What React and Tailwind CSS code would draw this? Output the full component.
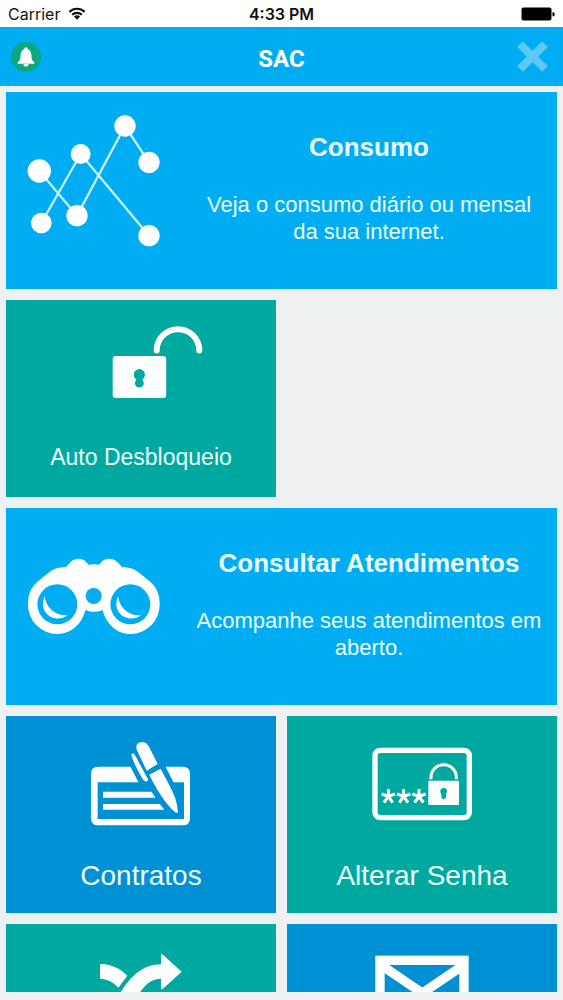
import React from "react";

function WifiIcon() {
  return (
    <svg viewBox="0 0 54 40" className="h-[13px] w-[18px]" fill="none" stroke="#111" strokeWidth="6.5" aria-hidden="true">
      <path d="M3.500 15 A34 34 0 0 1 50.500 15" />
      <path d="M12 24 A22 22 0 0 1 42 24" />
      <path d="M27 39 L17.500 29.500 A14 14 0 0 1 36.500 29.500 Z" fill="#111" stroke="none" />
    </svg>
  );
}

function BatteryIcon() {
  return (
    <svg viewBox="0 0 34 14" className="h-[14px] w-[34px]" aria-hidden="true">
      <rect x="0.500" y="0.500" width="30" height="13" rx="2" fill="#000" />
      <path d="M31.500 5 a2.200 2.200 0 0 1 0 4.400 Z" fill="#000" />
    </svg>
  );
}

function BellIcon() {
  return (
    <svg viewBox="0 0 54 60" className="h-5 w-[18px]" fill="#fff" aria-hidden="true">
      <path d="M27 1 a5 5 0 0 1 5 5 C40 9 43 17 43.500 27 C44 38 46 41 52 46 V50 H2 V46 C8 41 10 38 10.500 27 C11 17 14 9 22 6 a5 5 0 0 1 5 -5 Z" />
      <path d="M19 51 H35 C34 57 31 59 27 59 S20 57 19 51 Z" />
    </svg>
  );
}

function CloseIcon() {
  return (
    <svg viewBox="0 0 92 92" className="h-[31px] w-[31px]" stroke="#5cc8f7" strokeWidth="24" aria-hidden="true">
      <path d="M9 9 L83 83 M83 9 L9 83" />
    </svg>
  );
}

function NetworkIcon() {
  return (
    <g transform="translate(-6 -2) scale(0.33333)" fill="#fff">
      <path
        d="M118 243 L231 377 L375 108 L447 217 M124 399 L242 192 L447 437"
        fill="none"
        stroke="#c4f3ff"
        strokeWidth="7"
      />
      <circle cx="118" cy="243" r="35" />
      <circle cx="124" cy="399" r="31" />
      <circle cx="242" cy="192" r="30" />
      <circle cx="231" cy="377" r="32" />
      <circle cx="375" cy="108" r="32" />
      <circle cx="447" cy="217" r="32" />
      <circle cx="447" cy="437" r="32" />
    </g>
  );
}

function BinocularsIcon() {
  return (
    <g transform="translate(-6 22) scale(0.33333)">
      <path
        fill="#fff"
        d="M172 312 A88 88 0 0 1 84 223 C84 190 94 172 114 154 L146 128 C162 115 178 112 198 111 C210 98 218 86 235 86 C249 86 257 92 265 104 Q282 101 298 104 C306 92 314 86 329 86 C345 86 355 98 366 111 C386 112 401 115 417 128 L449 154 C469 172 479 190 479 223 A88 88 0 0 1 391 312 C352 312 319 284 308 240 Q282 251 256 240 C246 284 211 312 172 312 Z"
      />
      <g fill="#00adf2">
        <circle cx="172" cy="223" r="60" />
        <circle cx="391" cy="223" r="60" />
        <circle cx="281" cy="198" r="24" />
      </g>
      <g fill="#fff">
        <path d="M134 198 C137 228 160 258 203 256 C168 282 112 252 134 198 Z" />
        <path d="M354 198 C357 228 380 258 423 256 C388 282 332 252 354 198 Z" />
      </g>
    </g>
  );
}

function UnlockIcon() {
  return (
    <g>
      <rect x="106.700" y="56" width="53.500" height="42" rx="3" fill="#fff" />
      <path d="M150.700 50.500 A21.300 21.300 0 0 1 193.300 50.500" fill="none" stroke="#fff" strokeWidth="6" strokeLinecap="round" />
      <g fill="#00a99f">
        <circle cx="133.300" cy="74.700" r="5.600" />
        <circle cx="133.300" cy="83.200" r="4.400" />
        <rect x="130.300" y="76" width="6" height="7" />
      </g>
    </g>
  );
}

function ContractIcon() {
  return (
    <g transform="translate(54 -6) scale(0.33333)">
      <g fill="#fff">
        <path
          fillRule="evenodd"
          d="M115 170 H368 Q390 170 390 192 V324 Q390 346 368 346 H115 Q93 346 93 324 V192 Q93 170 115 170 Z M113 217 V327 H372 V217 Z"
        />
        <path d="M129 245 H275 L286 263 H129 Z" />
        <path d="M129 282 H299 L313 299 H129 Z" />
      </g>
      <path d="M209 165 L238 222 H343 L314 165 Z" fill="#0091d5" />
      <g fill="#fff">
        <path d="M231 121 C225 106 233 97 245 97 C256 96 263 102 268 112 L293 162 L260 182 Z" />
        <path d="M214 135 C216 128 222 130 226 137 L264 208 C264 216 258 217 251 211 C240 195 222 162 214 135 Z" />
        <path d="M268 194 L302 176 C322 214 344 252 349 276 L354 305 Q352 311 346 307 C316 281 288 236 268 194 Z" />
      </g>
    </g>
  );
}

function Asterisk({ x }) {
  return <path d={`M${x} 229 V207 M${x} 229 L${x - 20} 222 M${x} 229 L${x + 20} 222 M${x} 229 L${x - 13} 248 M${x} 229 L${x + 13} 248`} />;
}

function PasswordIcon() {
  return (
    <g transform="translate(53 4) scale(0.33333)" fill="none" stroke="#fff">
      <rect x="105" y="91" width="283" height="202" rx="16" strokeWidth="16" />
      <g strokeWidth="9">
        <Asterisk x={145} />
        <Asterisk x={191} />
        <Asterisk x={237} />
      </g>
      <path d="M273 178 V172 A38 38 0 0 1 349 172 V178" strokeWidth="9" />
      <rect x="265" y="182" width="92" height="73" rx="3" fill="#fff" stroke="none" />
      <g fill="#00a99f" stroke="none">
        <circle cx="311" cy="214" r="10" />
        <rect x="304" y="214" width="14" height="23" rx="6" />
      </g>
    </g>
  );
}

function ShuffleIcon() {
  return (
    <g transform="translate(-6 -19) scale(0.33333)" fill="#fff">
      <path d="M300 180 Q300 177 304 177 C334 178 360 190 382 212 L355 248 C340 231 322 222 300 221 Z" />
      <path d="M300 362 C330 362 345 290 362 262 C393 212 430 178 483 178 V150 Q484 145 489 149 L545 200 L489 251 Q484 255 483 249 V221 C455 222 439 234 420 262 C392 305 370 405 300 405 Z" />
      <path d="M483 405 C445 405 420 390 400 365 L426 330 C442 352 458 362 483 362 V332 L545 383 L483 437 Z" />
    </g>
  );
}

function MailIcon() {
  return (
    <g transform="translate(-7 -19) scale(0.33333)" fill="none" stroke="#fff">
      <rect x="300" y="166" width="252" height="184" strokeWidth="28" />
      <path d="M300 178 L427 264 L554 178" strokeWidth="28" />
    </g>
  );
}

function WideCard({ title, text, children }) {
  return (
    <button type="button" className="col-span-2 flex h-[197px] bg-[#00adf2] text-cyan-50">
      <svg viewBox="0 0 175 197" className="h-full w-[175px] shrink-0" aria-hidden="true">
        {children}
      </svg>
      <span className="flex flex-1 flex-col gap-[29px] px-3 pt-10 text-center">
        <span className="text-[26px] leading-[30px] font-bold">{title}</span>
        <span className="text-[22px] leading-[27px]">{text}</span>
      </span>
    </button>
  );
}

function Card({ label, name, color, size, children }) {
  return (
    <button type="button" aria-label={name} className={`flex h-[197px] flex-col items-center text-cyan-50 ${color}`}>
      <svg viewBox="70 0 130 140" className="h-[140px] w-[130px] shrink-0" aria-hidden="true">
        {children}
      </svg>
      <span className={size}>{label}</span>
    </button>
  );
}

export default function App() {
  return (
    <div className="flex h-screen flex-col bg-[#eff0f1] pb-2 font-['Liberation_Sans',Arial,sans-serif]">
      <div className="grid h-[27px] shrink-0 grid-cols-3 items-center bg-white px-2 font-['Inter',sans-serif] text-[16px] leading-5 text-[#111]">
        <span className="flex items-center gap-2">
          Carrier
          <WifiIcon />
        </span>
        <span className="text-center font-semibold">4:33 PM</span>
        <span className="flex justify-end">
          <BatteryIcon />
        </span>
      </div>

      <header className="grid h-[59px] shrink-0 grid-cols-[1fr_auto_1fr] items-center bg-[#00adf2] px-[11px]">
        <button type="button" aria-label="Notificações" className="flex size-[30px] items-center justify-center rounded-full bg-[#0ba882]">
          <BellIcon />
        </button>
        <h1 className="pt-1 font-['Roboto',sans-serif] text-[24px] leading-7 font-bold text-white">SAC</h1>
        <button type="button" aria-label="Fechar" className="mr-1 justify-self-end">
          <CloseIcon />
        </button>
      </header>

      <main className="min-h-0 flex-1 overflow-y-auto px-1.5 [scrollbar-width:none]">
        <div className="grid grid-cols-2 gap-[11px] pt-1.5">
          <WideCard title="Consumo" text="Veja o consumo diário ou mensal da sua internet.">
            <NetworkIcon />
          </WideCard>
          <Card label="Auto Desbloqueio" color="bg-[#00a99f]" size="text-[23px] leading-[34px]">
            <UnlockIcon />
          </Card>
          <WideCard title="Consultar Atendimentos" text="Acompanhe seus atendimentos em aberto.">
            <BinocularsIcon />
          </WideCard>
          <Card label="Contratos" color="bg-[#0091d5]" size="text-[28px] leading-[40px]">
            <ContractIcon />
          </Card>
          <Card label="Alterar Senha" color="bg-[#00a99f]" size="text-[28px] leading-[40px]">
            <PasswordIcon />
          </Card>
          <Card name="Transferir" color="bg-[#00a99f]" size="text-[28px] leading-[40px]">
            <ShuffleIcon />
          </Card>
          <Card name="Mensagens" color="bg-[#0091d5]" size="text-[28px] leading-[40px]">
            <MailIcon />
          </Card>
        </div>
      </main>
    </div>
  );
}
